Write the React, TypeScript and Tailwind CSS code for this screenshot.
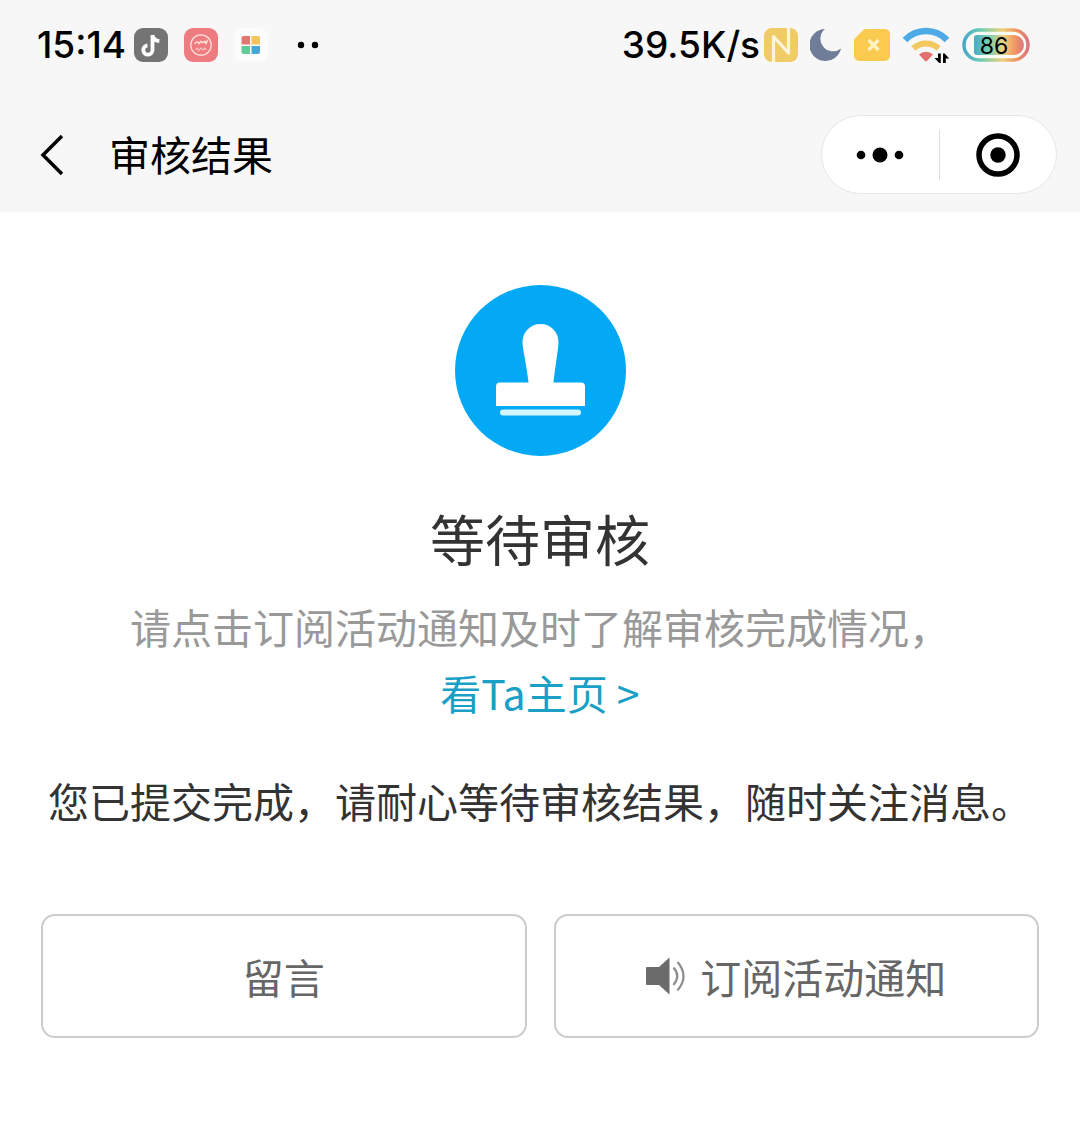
/**
 * 审核结果页：提交后等待审核，可留言或订阅活动通知。
 */
import type { ReactNode } from 'react';

function TiktokIcon() {
  return (
    <svg viewBox="0 0 34 34" className="size-[34px] shrink-0" aria-hidden="true">
      <rect width="34" height="34" rx="9" fill="#747474" />
      <path
        d="M18.500 7v15a4.600 4.600 0 1 1-5-4.500M18.500 7c.4 3.600 2.800 5.700 6.800 6"
        fill="none"
        stroke="#fff"
        strokeWidth="3.800"
      />
    </svg>
  );
}

function FaceIcon() {
  return (
    <svg viewBox="0 0 34 34" className="size-[34px] shrink-0" aria-hidden="true">
      <rect width="34" height="34" rx="9" fill="#ee7b7f" />
      <g fill="none" stroke="#ffe3dc" strokeWidth="1.200" strokeLinecap="round">
        <circle cx="17" cy="17" r="10.200" />
        <path d="M11 15.500c1-2 3-2 4 0l2-2 2 1.200 2-1.400 1 2.200 1.500-3" strokeWidth="1.500" />
        <path d="M12 21.500c0-2 2-2 2 0s2 1 2-.5 2-1 2 0 2 1.500 2 0 2-1 2 .5" strokeWidth="1" />
      </g>
    </svg>
  );
}

function GridIcon() {
  return (
    <svg viewBox="0 0 34 34" className="size-[34px] shrink-0" aria-hidden="true">
      <rect width="34" height="34" rx="9" fill="#fcfcfc" />
      <path d="M9.500 8H16v8.500H7.500V10a2 2 0 0 1 2-2z" fill="#e27670" />
      <path d="M17.500 8H24a2 2 0 0 1 2 2v6.500h-8.500z" fill="#f2c45c" />
      <path d="M7.500 18H16v8H9.500a2 2 0 0 1-2-2z" fill="#5fcb98" />
      <path d="M17.500 18H26v6a2 2 0 0 1-2 2h-6.500z" fill="#4aa4d4" />
    </svg>
  );
}

function NfcIcon() {
  return (
    <svg viewBox="0 0 34 34" className="size-[34px] shrink-0" aria-hidden="true">
      <rect width="34" height="34" rx="8" fill="#f1cb66" />
      <path d="M9.500 34V8.500L24.500 25V0" fill="none" stroke="#fbf3dc" strokeWidth="3.200" strokeLinejoin="round" />
    </svg>
  );
}

function MoonIcon() {
  return (
    <svg viewBox="0 0 32 34" className="h-[34px] w-8 shrink-0" aria-hidden="true">
      <path d="M15 1a16 16 0 1 0 16 19.500A11.500 11.500 0 0 1 15 1z" fill="#6f7d98" />
    </svg>
  );
}

function SimIcon() {
  return (
    <svg viewBox="0 0 36 34" className="h-[34px] w-9 shrink-0" aria-hidden="true">
      <path d="M12 1h19a5 5 0 0 1 5 5v22a5 5 0 0 1-5 5H5a5 5 0 0 1-5-5V13a4 4 0 0 1 1.200-3L9 2.200A4 4 0 0 1 12 1z" fill="#fbcb50" />
      <path d="M14.500 12l10 10m0-10l-10 10" stroke="#fff3c4" strokeWidth="3.200" />
    </svg>
  );
}

function WifiIcon() {
  return (
    <svg viewBox="0 0 48 36" className="h-9 w-12 shrink-0" aria-hidden="true">
      <path d="M3 13a29 29 0 0 1 42 0" fill="none" stroke="#4daae6" strokeWidth="6.500" />
      <path d="M11.500 21.500a18 18 0 0 1 25 0" fill="none" stroke="#f1c95e" strokeWidth="6" />
      <path d="M17 27.500a10 10 0 0 1 14 0l-5.500 6a2 2 0 0 1-3 0z" fill="#e2706f" />
      <path d="M36 26.500h2.800V36h-1.600L32.500 31H36zM43.800 36H41v-9.500h1.600l4.600 5h-3.400z" fill="#000" />
    </svg>
  );
}

function BatteryIcon() {
  return (
    <svg viewBox="0 0 68 34" className="h-[34px] w-[68px] shrink-0" role="img" aria-label="86%">
      <defs>
        <linearGradient id="battery" x1="0" x2="1">
          <stop offset="0" stopColor="#4aa9c9" />
          <stop offset="0.280" stopColor="#6fcfb0" />
          <stop offset="0.600" stopColor="#efd07a" />
          <stop offset="0.800" stopColor="#f29a62" />
          <stop offset="1" stopColor="#dd7480" />
        </linearGradient>
      </defs>
      <rect x="2" y="2" width="64" height="30" rx="15" fill="#fbfbf6" stroke="url(#battery)" strokeWidth="3.500" />
      <path d="M15 7h37a10 10 0 0 1 0 20H15a3 3 0 0 1-3-3V10a3 3 0 0 1 3-3z" fill="url(#battery)" />
      <text x="32" y="26" textAnchor="middle" fontSize="23" fontWeight="400" fontFamily="Inter, sans-serif">
        86
      </text>
    </svg>
  );
}

function StampIcon() {
  return (
    <svg viewBox="0 0 171 171" className="size-[171px]" aria-hidden="true">
      <circle cx="85.500" cy="85.500" r="85.500" fill="#03a9f4" />
      <path
        d="M67.500 57a18 18 0 0 1 36 0c0 6-3 22-5 40.500H126a4 4 0 0 1 4 4V121H41v-19.500a4 4 0 0 1 4-4h28.500C71.500 79 67.500 64 67.500 57z"
        fill="#fff"
      />
      <rect x="45" y="124.500" width="81" height="6" rx="3" fill="#d2f7ff" />
    </svg>
  );
}

function SpeakerIcon() {
  return (
    <svg viewBox="0 0 40 40" className="size-10 shrink-0" aria-hidden="true">
      <path d="M1 11h12L23.500 1.500v37L13 29H1a1 1 0 0 1-1-1V12a1 1 0 0 1 1-1z" fill="#6b6b6b" />
      <path d="M27.500 11.500q7.500 8.500 0 17.500M31.500 6q12 14 0 28.500" fill="none" stroke="#8c8c8c" strokeWidth="2.200" />
    </svg>
  );
}

function ActionButton({ children }: { children: ReactNode }) {
  return (
    <button
      type="button"
      className="flex h-[124px] items-center justify-center gap-[14px] rounded-[14px] border-2 border-[#cccccc] text-[41px] leading-[66px] text-[#666666]"
    >
      {children}
    </button>
  );
}

export default function App() {
  return (
    <div className="min-h-screen bg-white font-['Noto_Sans_CJK_SC',sans-serif] text-[#333333]">
      <header className="bg-[#f7f7f7] text-black">
        {/* 状态栏 */}
        <div className="flex h-[90px] items-center justify-between pr-[50px] pl-[37px] font-['Inter',sans-serif] text-[37px] font-medium">
          <div className="flex items-center gap-4">
            <div className="flex items-center gap-2">
              <time>15:14</time>
              <TiktokIcon />
            </div>
            <FaceIcon />
            <GridIcon />
            <svg viewBox="0 0 50 8" className="h-2 w-[50px]" aria-hidden="true">
              <circle cx="17" cy="4" r="3.200" />
              <circle cx="31" cy="4" r="3.200" />
            </svg>
          </div>
          <div className="flex items-center gap-3">
            <div className="flex items-center gap-1">
              <span>39.5K/s</span>
              <NfcIcon />
            </div>
            <MoonIcon />
            <SimIcon />
            <WifiIcon />
            <BatteryIcon />
          </div>
        </div>

        {/* 导航栏 */}
        <div className="flex items-center justify-between pt-[25px] pr-[23px] pb-[18px] pl-10">
          <div className="flex items-center gap-[45px]">
            <button type="button" aria-label="返回">
              <svg viewBox="0 0 24 42" className="h-[42px] w-6" fill="none" stroke="#000" strokeWidth="3.500">
                <path d="M22 2L3 21l19 19" />
              </svg>
            </button>
            <h1 className="pb-1 text-[41px] leading-[66px]">审核结果</h1>
          </div>
          <div className="flex h-[79px] w-[236px] items-center rounded-full border border-[#e6e6e6] bg-white">
            <button type="button" aria-label="更多" className="flex flex-1 justify-center">
              <svg viewBox="0 0 48 16" className="h-4 w-12">
                <circle cx="5" cy="8" r="4.300" />
                <circle cx="24" cy="8" r="7.500" />
                <circle cx="43" cy="8" r="4.300" />
              </svg>
            </button>
            <div className="h-[50px] w-px bg-[#dddddd]" />
            <button type="button" aria-label="关闭" className="flex flex-1 justify-center">
              <svg viewBox="0 0 44 44" className="size-11">
                <circle cx="22" cy="22" r="19" fill="none" stroke="#000" strokeWidth="5.500" />
                <circle cx="22" cy="22" r="7.700" />
              </svg>
            </button>
          </div>
        </div>
      </header>

      <main className="flex flex-col items-center px-[41px] pt-[73px]">
        <StampIcon />
        <h2 className="mt-[41px] text-[55px] leading-[80px]">等待审核</h2>
        <p className="mt-4 text-center text-[41px] leading-[66px] text-[#999999]">
          请点击订阅活动通知及时了解审核完成情况，
          <br />
          <a href="#profile" className="text-[#1a9fc6]">
            看Ta主页 &gt;
          </a>
        </p>
        <p className="mt-[42px] text-[41px] leading-[66px]">您已提交完成，请耐心等待审核结果，随时关注消息。</p>
        <div className="mt-[81px] grid w-full grid-cols-2 gap-[27px]">
          <ActionButton>留言</ActionButton>
          <ActionButton>
            <SpeakerIcon />
            订阅活动通知
          </ActionButton>
        </div>
      </main>
    </div>
  );
}
